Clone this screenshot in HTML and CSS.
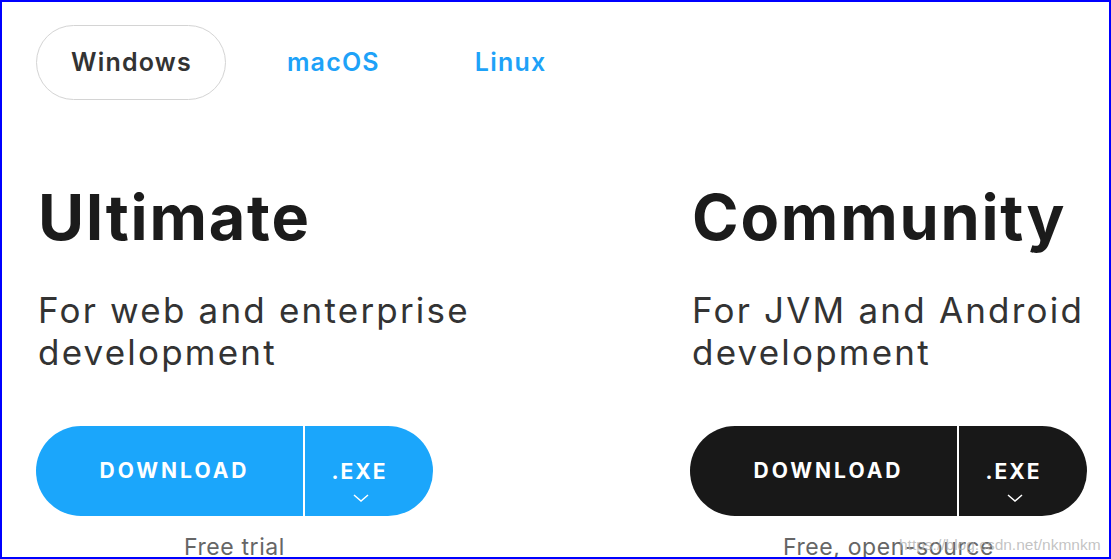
FILE: index.html
```html
<!DOCTYPE html>
<html lang="en">

<head>
  <meta charset="UTF-8">
  <meta name="viewport" content="width=device-width, initial-scale=1.0">
  <title>Download</title>
  <link rel="stylesheet" href="styles.css">
</head>

<body>
  <div class="frame">
    <ul class="tabs">
      <li class="tab active">Windows</li>
      <li class="tab">macOS</li>
      <li class="tab">Linux</li>
    </ul>
    <div class="editions">
      <div class="edition">
        <h2 class="title">Ultimate</h2>
        <p class="desc">For web and enterprise development</p>
        <div class="btn blue">
          <span class="main">DOWNLOAD</span>
          <span class="ext">.EXE
            <svg width="16" height="8" viewBox="0 0 16 8"><path d="M1 1 L8 7 L15 1" fill="none" stroke="#fff" stroke-width="1.5"/></svg>
          </span>
        </div>
        <p class="note">Free trial</p>
      </div>
      <div class="edition">
        <h2 class="title">Community</h2>
        <p class="desc">For JVM and Android development</p>
        <div class="btn dark">
          <span class="main">DOWNLOAD</span>
          <span class="ext">.EXE
            <svg width="16" height="8" viewBox="0 0 16 8"><path d="M1 1 L8 7 L15 1" fill="none" stroke="#fff" stroke-width="1.5"/></svg>
          </span>
        </div>
        <p class="note">Free, open-source</p>
      </div>
    </div>
    <span class="mark">https://blog.csdn.net/nkmnkm</span>
  </div>
</body>

</html>
```

FILE: styles.css
```css
* {
  margin: 0;
  padding: 0;
  list-style: none;
  box-sizing: border-box;
}

body {
  font-family: Inter, "Noto Sans", sans-serif;
  color: #1b1b1b;
  background: #fff;
}

.frame {
  position: relative;
  width: 1111px;
  height: 559px;
  border: 2px solid #0000ff;
  overflow: hidden;
  padding: 23px 0 0 34px;
}

.tabs {
  display: flex;
  gap: 26px;
}

.tab {
  height: 75px;
  line-height: 73px;
  padding: 0 33px 0 34px;
  border: 1px solid transparent;
  border-radius: 38px;
  font-size: 25px;
  font-weight: 600;
  letter-spacing: 1.2px;
  color: #1ea2f8;
}

.tab.active {
  border-color: #d4d4d4;
  color: #333;
}

.editions {
  display: grid;
  grid-template-columns: 654px 1fr;
  margin-top: 82px;
}

.edition {
  white-space: nowrap;
}

.title {
  font-size: 63px;
  font-weight: 700;
  line-height: 70px;
  letter-spacing: 1.8px;
  padding-left: 2px;
}

.desc {
  width: 500px;
  white-space: normal;
  margin-top: 37px;
  padding-left: 2px;
  font-size: 35px;
  line-height: 42px;
  letter-spacing: 2.2px;
  color: #333;
}

.btn {
  display: flex;
  width: 397px;
  height: 90px;
  margin-top: 53px;
  border-radius: 45px;
  overflow: hidden;
  color: #fff;
  font-weight: 700;
}

.btn.blue {
  background: #1ba6fb;
}

.btn.dark {
  background: #181818;
}

.btn .main {
  width: 269px;
  display: flex;
  align-items: center;
  justify-content: center;
  font-size: 21px;
  letter-spacing: 3px;
  border-right: 2px solid #fff;
  padding: 0 0 2px 10px;
}

.btn .ext {
  flex: 1;
  display: flex;
  flex-direction: column;
  align-items: center;
  font-size: 21px;
  line-height: 24px;
  letter-spacing: 2px;
  padding: 34px 19px 0 0;
}

.btn .ext svg {
  margin-top: 10px;
  margin-left: 2px;
}

.note {
  width: 397px;
  text-align: center;
  margin-top: 17px;
  font-size: 23px;
  letter-spacing: .6px;
  color: #666;
}

.mark {
  position: absolute;
  left: 897px;
  top: 534px;
  font-family: "Liberation Sans", sans-serif;
  font-size: 15.5px;
  color: rgba(175, 175, 175, .75);
}
```
